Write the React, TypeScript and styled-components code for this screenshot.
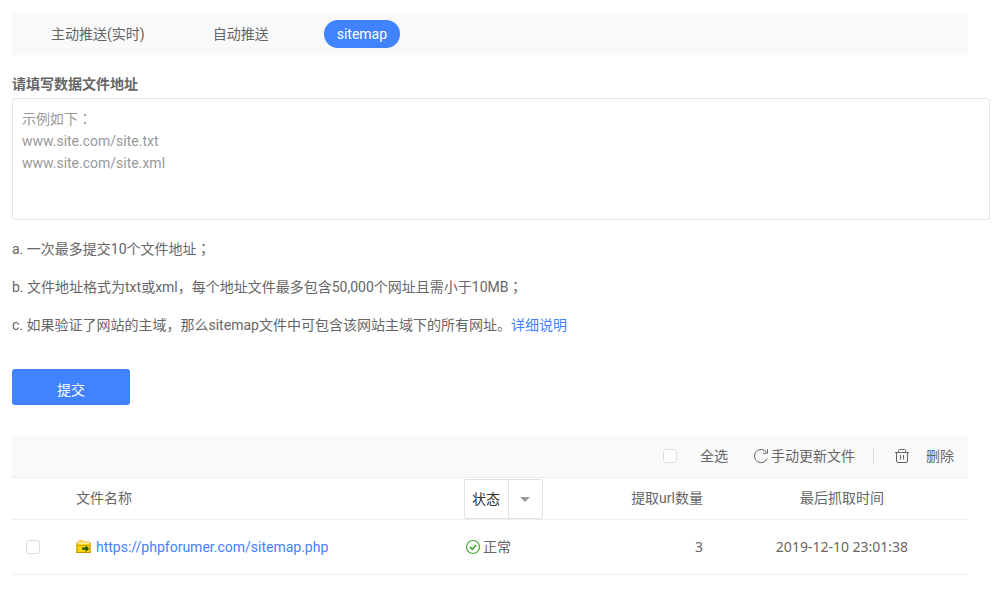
import React, { useState } from "react";
import styled, { createGlobalStyle } from "styled-components";

const GlobalStyle = createGlobalStyle`
  *, *::before, *::after { box-sizing: border-box; }
  body {
    margin: 0;
    background: #fff;
    color: #666;
    font: 14px/22px Roboto, "Noto Sans CJK SC", sans-serif;
  }
  button, input, select, textarea { font: inherit; color: inherit; margin: 0; }
`;

const Page = styled.main`
  padding: 13px 11px 15px 12px;
`;

const TabBar = styled.nav`
  display: flex;
  align-items: center;
  gap: 42px;
  height: 42px;
  margin-right: 22px;
  padding-left: 26px;
  background: #f9f9f9;
`;

const Tab = styled.button<{ $active?: boolean }>`
  height: 28px;
  padding: 0 13px;
  border: 0;
  border-radius: 14px;
  background: ${(p) => (p.$active ? "#4182ff" : "transparent")};
  color: ${(p) => (p.$active ? "#fff" : "#666")};
  cursor: pointer;
`;

const Form = styled.form`
  display: flex;
  flex-direction: column;
  align-items: flex-start;
  padding-top: 18px;
`;

const FieldLabel = styled.label`
  font-weight: 700;
`;

const AddressBox = styled.textarea`
  display: block;
  width: 100%;
  height: 122px;
  margin-top: 3px;
  padding: 9px;
  border: 1px solid #e6e6e6;
  border-radius: 3px;
  font-family: Roboto, "Noto Sans CJK TC", sans-serif;
  resize: none;
  outline: 0;
  &::placeholder { color: #999; opacity: 1; }
`;

const Hints = styled.div`
  display: flex;
  flex-direction: column;
  gap: 16px;
  padding: 18px 0 33px;
`;

const Hint = styled.p`
  margin: 0;
`;

const CenteredMark = styled.span`
  font-family: "Noto Sans CJK TC", sans-serif;
  line-height: 1;
`;

const Link = styled.a`
  color: #4182ff;
  text-decoration: none;
`;

const Submit = styled.button`
  width: 118px;
  height: 36px;
  padding: 5px 0 0;
  border: 0;
  border-radius: 3px;
  background: #4182ff;
  color: #fff;
  cursor: pointer;
`;

const Files = styled.section`
  margin: 30px 22px 0 0;
`;

const Toolbar = styled.div`
  display: flex;
  align-items: center;
  justify-content: flex-end;
  height: 43px;
  padding-right: 14px;
  border-bottom: 1px solid #eee;
  background: #f9f9f9;
`;

const Tick = styled.input`
  appearance: none;
  display: block;
  width: 14px;
  height: 14px;
  border: 1px solid #ddd;
  border-radius: 3px;
  background: #fff;
  &:checked { background: #4182ff; border-color: #4182ff; }
`;

const SelectAll = styled.label`
  display: flex;
  align-items: center;
  gap: 23px;
  margin-right: 25px;
`;

const ToolButton = styled.button<{ $gap: number }>`
  display: flex;
  align-items: center;
  gap: ${(p) => p.$gap}px;
  padding: 0;
  border: 0;
  background: none;
  cursor: pointer;
`;

const Divider = styled.span`
  width: 1px;
  height: 18px;
  margin: 0 20px 0 18px;
  background: #ddd;
`;

const Table = styled.table`
  width: 100%;
  table-layout: fixed;
  border-collapse: collapse;
`;

const Column = styled.col<{ $width?: number }>`
  width: ${(p) => (p.$width ? `${p.$width}px` : "auto")};
`;

const Row = styled.tr<{ $height: number }>`
  height: ${(p) => p.$height}px;
  border-bottom: 1px solid #eee;
`;

const cellPadding = { left: "0", right: "0 13px 0 0", center: "0" };

const Head = styled.th<{ $align?: "left" | "right" | "center" }>`
  padding: ${(p) => cellPadding[p.$align ?? "left"]};
  text-align: ${(p) => p.$align ?? "left"};
  font-weight: 400;
`;

const Cell = styled.td<{ $align?: "left" | "right" | "center" }>`
  padding: ${(p) => cellPadding[p.$align ?? "left"]};
  text-align: ${(p) => p.$align ?? "left"};
`;

const NumberCell = styled(Cell)`
  font-family: "Noto Sans", sans-serif;
`;

const TickSlot = styled.div`
  padding-left: 14px;
`;

const Inline = styled.span<{ $gap: number }>`
  display: flex;
  align-items: center;
  gap: ${(p) => p.$gap}px;
`;

const StatusFilter = styled.div`
  display: grid;
  grid-template-columns: 44px 35px;
  width: 79px;
  height: 40px;
  margin: 1px 0 -1px;
`;

const StatusSelect = styled.select`
  grid-area: 1 / 1 / 2 / 3;
  appearance: none;
  padding: 0 7px;
  border: 1px solid #e2e2e2;
  border-radius: 0 3px 3px 0;
  background: #fff;
  color: #333;
`;

const Caret = styled.span`
  grid-area: 1 / 2;
  display: flex;
  align-items: center;
  justify-content: center;
  padding-right: 2px;
  border-left: 1px solid #e2e2e2;
  pointer-events: none;
`;

const RefreshIcon = () => (
  <svg width="16" height="16" viewBox="0 0 16 16" fill="none" stroke="#666" aria-hidden="true">
    <path d="M14.2 10.500A6.600 6.600 0 1 1 13.400 4.200" />
    <path d="M14.500 1.200v4H10" />
  </svg>
);

const TrashIcon = () => (
  <svg width="16" height="16" viewBox="0 0 16 16" fill="none" stroke="#666" aria-hidden="true">
    <path d="M1 4.500h14M4.500 4.500v-2q0-1 1-1h5q1 0 1 1v2M2.500 4.500v8.500q0 1.500 1.500 1.500h8q1.500 0 1.500-1.500V4.500M6.500 7v4.500M9.500 7v4.500" />
  </svg>
);

const FolderIcon = () => (
  <svg width="15" height="15" viewBox="0 0 15 15" aria-hidden="true">
    <path d="M1 4V2h2V1h4v1h6.500v2z" fill="#f3dc8a" />
    <path d="M3 1h4v2H3z" fill="#f5cf3a" />
    <path d="M.5 4h14v10H.5z" fill="#fdd60a" />
    <path d="M.5 4h14v1H.5z" fill="#ffee80" />
    <path d="M2 6h10.500v1H2z" fill="#d6a400" />
    <path d="M1 3.500v10.500M14 3.500v10.500M.5 13.500h14" stroke="#bd8d06" />
    <path d="M6 8.500h3.500V6.300l3.700 3.400-3.700 3.300v-2.200H6z" fill="#1f5b0c" />
  </svg>
);

const OkIcon = () => (
  <svg width="16" height="16" viewBox="0 0 16 16" fill="none" stroke="#45ad35" aria-hidden="true">
    <circle cx="9" cy="8" r="6.500" strokeWidth="1.200" />
    <path d="M5.800 7.800l2.500 2.400 4-4.200" strokeWidth="1.700" />
  </svg>
);

const CaretIcon = () => (
  <svg width="10" height="5" viewBox="0 0 10 5" aria-hidden="true">
    <path d="M0 0h10L5 5z" fill="#999" />
  </svg>
);

const tabs = ["主动推送(实时)", "自动推送", "sitemap"];

const files = [
  { url: "https://phpforumer.com/sitemap.php", status: "正常", count: 3, time: "2019-12-10 23:01:38" },
];

export default function App() {
  const [tab, setTab] = useState("sitemap");
  const [checked, setChecked] = useState(false);
  return (
    <>
      <GlobalStyle />
      <Page>
        <TabBar>
          {tabs.map((name) => (
            <Tab key={name} type="button" $active={name === tab} onClick={() => setTab(name)}>
              {name}
            </Tab>
          ))}
        </TabBar>
        <Form onSubmit={(e) => e.preventDefault()}>
          <FieldLabel htmlFor="addresses">请填写数据文件地址</FieldLabel>
          <AddressBox id="addresses" placeholder={"示例如下：\nwww.site.com/site.txt\nwww.site.com/site.xml"} />
          <Hints>
            <Hint>
              a. 一次最多提交10个文件地址<CenteredMark>；</CenteredMark>
            </Hint>
            <Hint>
              b. 文件地址格式为txt或xml，每个地址文件最多包含50,000个网址且需小于10MB<CenteredMark>；</CenteredMark>
            </Hint>
            <Hint>
              c. 如果验证了网站的主域，那么sitemap文件中可包含该网站主域下的所有网址。<Link href="#help">详细说明</Link>
            </Hint>
          </Hints>
          <Submit type="submit">提交</Submit>
        </Form>
        <Files>
          <Toolbar>
            <SelectAll>
              <Tick type="checkbox" checked={checked} onChange={() => setChecked(!checked)} />
              全选
            </SelectAll>
            <ToolButton type="button" $gap={2}>
              <RefreshIcon />
              手动更新文件
            </ToolButton>
            <Divider />
            <ToolButton type="button" $gap={16}>
              <TrashIcon />
              删除
            </ToolButton>
          </Toolbar>
          <Table>
            <colgroup>
              <Column $width={64} />
              <Column />
              <Column $width={120} />
              <Column $width={132} />
              <Column $width={252} />
            </colgroup>
            <thead>
              <Row $height={41}>
                <Cell />
                <Head>文件名称</Head>
                <Head>
                  <StatusFilter>
                    <StatusSelect aria-label="状态">
                      <option>状态</option>
                    </StatusSelect>
                    <Caret>
                      <CaretIcon />
                    </Caret>
                  </StatusFilter>
                </Head>
                <Head $align="right">提取url数量</Head>
                <Head $align="center">最后抓取时间</Head>
              </Row>
            </thead>
            <tbody>
              {files.map((file) => (
                <Row key={file.url} $height={55}>
                  <Cell>
                    <TickSlot>
                      <Tick
                        type="checkbox"
                        aria-label={file.url}
                        checked={checked}
                        onChange={() => setChecked(!checked)}
                      />
                    </TickSlot>
                  </Cell>
                  <Cell>
                    <Inline $gap={5}>
                      <FolderIcon />
                      <Link href={file.url}>{file.url}</Link>
                    </Inline>
                  </Cell>
                  <Cell>
                    <Inline $gap={3}>
                      <OkIcon />
                      {file.status}
                    </Inline>
                  </Cell>
                  <NumberCell $align="right">{file.count}</NumberCell>
                  <NumberCell $align="center">{file.time}</NumberCell>
                </Row>
              ))}
            </tbody>
          </Table>
        </Files>
      </Page>
    </>
  );
}
